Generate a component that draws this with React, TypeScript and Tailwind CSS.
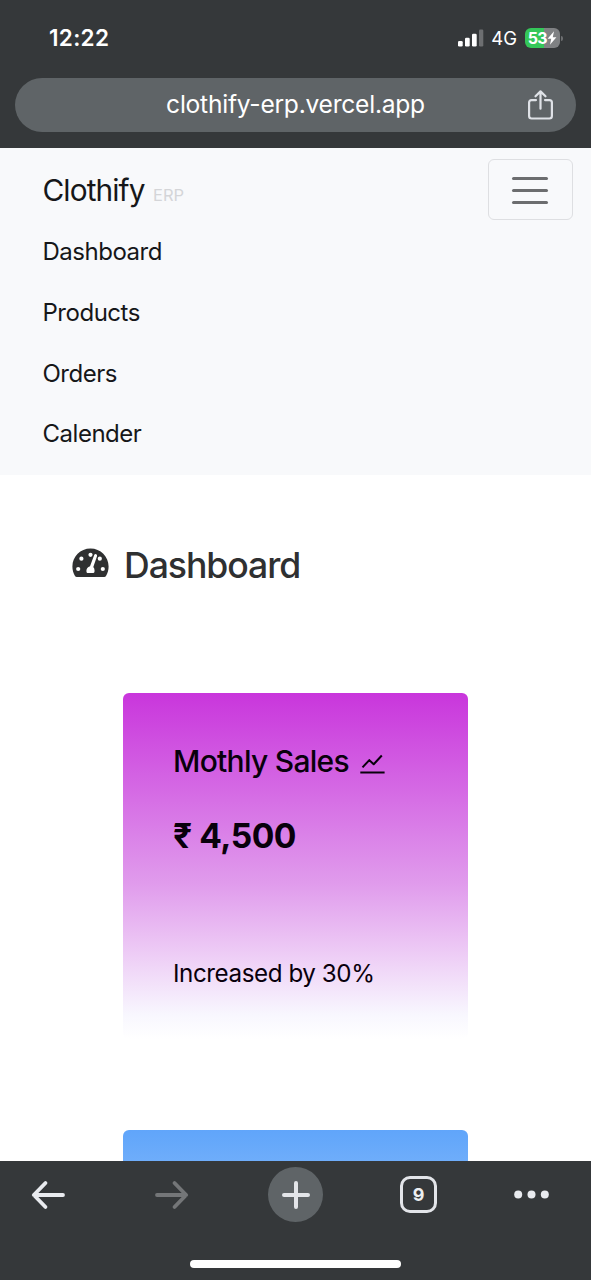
const navLinks = ["Dashboard", "Products", "Orders", "Calender"];

function StatusBar() {
  return (
    <div className="flex h-[78px] items-center justify-between pl-[49px] pr-[28px] pb-[2px]">
      <span className="text-[22.5px] font-semibold leading-none text-white tracking-[0.3px]">12:22</span>
      <div className="flex items-center">
        <svg width="27" height="18" viewBox="0 0 27 18" className="mr-[7px]">
          <rect x="1" y="12" width="4.7" height="5.5" rx="1.3" fill="#fff" />
          <rect x="8" y="8.7" width="4.7" height="8.8" rx="1.3" fill="#fff" />
          <rect x="15" y="4.7" width="4.7" height="12.8" rx="1.3" fill="#fff" />
          <rect x="22" y="0.5" width="4.3" height="17" rx="1.3" fill="#6d6f71" />
        </svg>
        <span className="mr-[8px] text-[18.5px] leading-none text-white">4G</span>
        <div className="flex h-[20px] w-[35px] items-center justify-center overflow-hidden rounded-[6px] bg-[linear-gradient(90deg,#34c759_54%,#7f8183_54%)]">
          <span className="text-[16px] font-bold leading-none tracking-[-0.7px] text-white">53</span>
          <svg className="ml-[0.5px]" width="10" height="14" viewBox="0 0 9 13">
            <path d="M6.4 0.3 0.4 7.2h3.4L2.6 12.7 8.6 5.7H5.2Z" fill="#fff" />
          </svg>
        </div>
        <span className="ml-[1px] h-[5px] w-[2px] rounded-r-full bg-[#6d6f71]" />
      </div>
    </div>
  );
}

function AddressBar() {
  return (
    <div className="mx-[15px] grid h-[54px] grid-cols-[1fr_auto_1fr] items-center rounded-full bg-[#5f6467]">
      <span />
      <span className="pb-[2px] text-[24.6px] leading-[30px] tracking-[-0.25px] text-white">clothify-erp.vercel.app</span>
      <svg
        className="mr-[22px] justify-self-end"
        width="27"
        height="32"
        viewBox="0 0 27 32"
        fill="none"
        stroke="#dfe2e7"
        strokeWidth="2.2"
        strokeLinecap="round"
        strokeLinejoin="round"
      >
        <path d="M9 11.1H4.6Q2.1 11.1 2.1 13.6V27Q2.1 29.5 4.6 29.5H22.4Q24.9 29.5 24.9 27V13.6Q24.9 11.1 22.4 11.1H18" />
        <path d="M13.5 19.7V2.6M8.5 7.3 13.5 2.4 18.5 7.3" />
      </svg>
    </div>
  );
}

function Navbar() {
  return (
    <nav className="h-[327px] bg-[#f8f9fb] pt-[11px] text-[#161719]">
      <div className="flex h-[61px] items-center justify-between pl-[42.5px] pr-[18px]">
        <div className="flex items-baseline">
          <span className="text-[29.8px] leading-[46px] tracking-[-0.9px]">Clothify</span>
          <span className="ml-[8.5px] text-[16.5px] text-[#d4d5d8]">ERP</span>
        </div>
        <button
          aria-label="Toggle navigation"
          className="flex h-[61px] w-[85px] flex-col items-center justify-center gap-[9px] rounded-[6px] border-[1.5px] border-[#dedfe2] pt-[1px] pr-[1px]"
        >
          <span className="h-[3px] w-[36px] rounded-full bg-[#6c6d6f]" />
          <span className="h-[3px] w-[36px] rounded-full bg-[#6c6d6f]" />
          <span className="h-[3px] w-[36px] rounded-full bg-[#6c6d6f]" />
        </button>
      </div>
      <ul className="pl-[42.5px] pt-[1.8px]">
        {navLinks.map((label) => (
          <li key={label} className="flex h-[60.7px] items-center text-[24px] leading-none tracking-[-0.48px]">
            {label}
          </li>
        ))}
      </ul>
    </nav>
  );
}

function GaugeIcon() {
  return (
    <svg className="mb-[4px]" width="37" height="30" viewBox="0 0 37 30">
      <path
        d="M18.5 0.5C8.4 0.5 0.4 8.5 0.4 18.5C0.4 22 1.3 25.3 3 28Q3.6 29 4.8 29H32.2Q33.4 29 34 28C35.7 25.3 36.6 22 36.6 18.5C36.6 8.5 28.6 0.5 18.5 0.5Z"
        fill="#2f3031"
      />
      <g fill="#fff">
        <circle cx="6.2" cy="21" r="2.1" />
        <circle cx="9.4" cy="10.7" r="2.1" />
        <circle cx="18.5" cy="6.8" r="2.1" />
        <circle cx="27.8" cy="10.7" r="2.1" />
        <circle cx="30.8" cy="21" r="2.1" />
        <path d="M22.3 6.8Q23 5.7 24.2 6.2Q25.4 6.8 25 8.2L21.3 19.1Q22.7 20.5 22.6 22.9Q22.5 25 21.4 25H15.2Q14.3 24.9 14.4 22.8Q14.5 19.4 18 18.3Z" />
      </g>
    </svg>
  );
}

function SalesCard() {
  return (
    <section className="mx-auto h-[346px] w-[345px] rounded-[6px] bg-[linear-gradient(180deg,#c936dc_0%,#e09bec_55%,#eabff3_70%,#f8f7fe_93%,#ffffff_100%)] pl-[50px] text-[#09000c]">
      <div className="flex items-center pt-[50px]">
        <h2 className="text-[30px] font-medium leading-[36px] tracking-[-0.72px]">Mothly Sales</h2>
        <svg
          className="ml-[11px] mt-[5px]"
          width="25"
          height="20"
          viewBox="0 0 25 20"
          fill="none"
          stroke="currentColor"
          strokeWidth="2"
          strokeLinejoin="round"
        >
          <path d="M2.5 13.4 9.3 6.1 13.7 10.3 21.8 1.5M0.3 18.5H24.6" />
        </svg>
      </div>
      <p className="mt-[36px] text-[33.6px] font-bold leading-[42px] tracking-[-0.5px]">₹ 4,500</p>
      <p className="mt-[99px] text-[24.2px] leading-[36px] tracking-[-0.43px]">Increased by 30%</p>
    </section>
  );
}

function BrowserToolbar() {
  return (
    <footer className="h-[119px] shrink-0 bg-[#35383a]">
      <div className="flex h-[67px] items-center pl-[31px]">
        <svg width="35" height="30" viewBox="0 0 35 30" fill="none" stroke="#e9ebef" strokeWidth="3.8" strokeLinecap="round" strokeLinejoin="round">
          <path d="M32 15H3M14.5 3 2.8 15 14.5 27" />
        </svg>
        <svg className="ml-[88px]" width="35" height="30" viewBox="0 0 35 30" fill="none" stroke="#747678" strokeWidth="3.8" strokeLinecap="round" strokeLinejoin="round">
          <path d="M3 15H32M20.5 3 32.2 15 20.5 27" />
        </svg>
        <div className="ml-[79px] flex size-[55px] items-center justify-center rounded-full bg-[#5f6467]">
          <svg width="30" height="30" viewBox="0 0 30 30" stroke="#e3e5e9" strokeWidth="4" strokeLinecap="round">
            <path d="M15 3V27M3 15H27" />
          </svg>
        </div>
        <div className="ml-[77px] flex size-[37px] items-center justify-center rounded-[10px] border-[3px] border-[#e3e5e9] text-[18px] font-bold leading-none text-[#eceef1]">
          9
        </div>
        <svg className="ml-[77px]" width="35" height="9" viewBox="0 0 35 9" fill="#e9ebef">
          <circle cx="4.2" cy="4.5" r="4" />
          <circle cx="17.5" cy="4.5" r="4" />
          <circle cx="30.8" cy="4.5" r="4" />
        </svg>
      </div>
      <div className="mx-auto mt-[32px] h-[8px] w-[211px] rounded-full bg-white" />
    </footer>
  );
}

export default function App() {
  return (
    <div className="flex h-[1280px] w-[591px] flex-col overflow-hidden bg-white font-['Inter','Liberation_Sans',sans-serif]">
      <header className="h-[148px] shrink-0 bg-[#35383a]">
        <StatusBar />
        <AddressBar />
      </header>
      <div className="min-h-0 flex-1 overflow-hidden">
        <Navbar />
        <main>
          <div className="flex items-center pl-[72px] pt-[68px]">
            <GaugeIcon />
            <h1 className="ml-[15px] pt-[1px] text-[35.6px] font-medium leading-[43px] tracking-[-1.05px] text-[#2f3031]">Dashboard</h1>
          </div>
          <div className="flex flex-col gap-[91px] pt-[106px]">
            <SalesCard />
            <section className="mx-auto h-[346px] w-[345px] rounded-[6px] bg-[linear-gradient(180deg,#60a5fa_0%,#ffffff_100%)]" />
          </div>
        </main>
      </div>
      <BrowserToolbar />
    </div>
  );
}
